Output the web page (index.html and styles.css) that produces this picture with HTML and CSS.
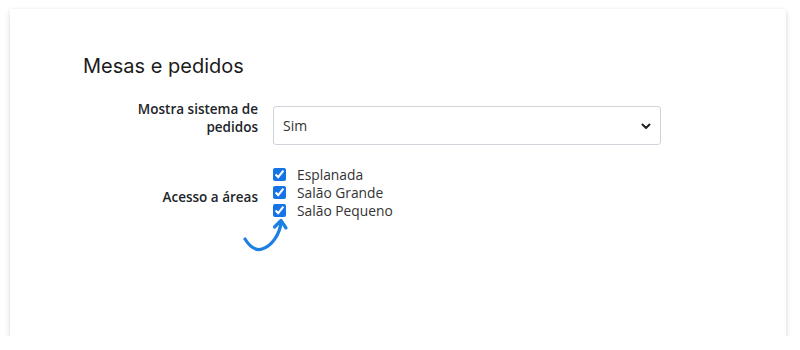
FILE: index.html
```html
<!DOCTYPE html>
<html>

<head>
  <title>Mesas e pedidos</title>
  <link rel="stylesheet" href="styles.css">
</head>

<body>

  <div class="card">
    <h2 class="title">Mesas e pedidos</h2>

    <div class="row">
      <label class="label" for="pedidos">Mostra sistema de pedidos</label>
      <div class="field">
        <div class="select">
          <span>Sim</span>
          <svg class="chevron" width="10" height="7" viewBox="0 0 10 7">
            <path d="M1.5 1.5 L5 5 L8.5 1.5" fill="none" stroke="#222" stroke-width="2" stroke-linecap="round" stroke-linejoin="round" />
          </svg>
        </div>
      </div>
    </div>

    <div class="row row-areas">
      <div class="label">Acesso a áreas</div>
      <div class="field checks">
        <label class="check"><input type="checkbox" checked /> Esplanada</label>
        <label class="check"><input type="checkbox" checked /> Salão Grande</label>
        <label class="check"><input type="checkbox" checked /> Salão Pequeno</label>
        <svg class="arrow" width="50" height="42" viewBox="0 0 50 42">
          <!-- curved pointer to the last checkbox -->
          <path d="M5 25 C10 33 16 37 22 35 C32 32 40 20 41 8" fill="none" stroke="#1b7fe3" stroke-width="3.2" stroke-linecap="round" />
          <path d="M34.5 13 L41 6.5 L46 14" fill="none" stroke="#1b7fe3" stroke-width="3.2" stroke-linecap="round" stroke-linejoin="round" />
        </svg>
      </div>
    </div>
  </div>

</body>

</html>
```

FILE: styles.css
```css
body { margin: 0; background: #fff; font-family: "Open Sans", "Noto Sans", Arial, sans-serif; color: #212529; }

.card {
  margin: 9px 14px 0 10px;
  height: 327px;
  box-sizing: border-box;
  background: #fff;
  box-shadow: 0 4px 6px rgba(30, 40, 110, 0.14), 0 0 3px rgba(30, 40, 110, 0.08);
  padding: 44px 0 0 73px;
}

.title {
  margin: 0 0 21px 0;
  font-family: "Inter", "Noto Sans", sans-serif;
  font-weight: 400;
  font-size: 20px;
  line-height: 26px;
  color: #1b1b1b;
}

.row { display: flex; align-items: flex-start; }
.row-areas { margin-top: 20px; align-items: center; }

.label {
  width: 175px;
  margin-right: 15px;
  text-align: right;
  font-weight: 600;
  font-size: 13.5px;
  line-height: 18px;
  color: #212529;
}
.row-areas .label { padding-top: 10px; }

.field { position: relative; }

.select {
  width: 388px;
  height: 39px;
  margin-top: 6px;
  box-sizing: border-box;
  border: 1px solid #ced4da;
  border-radius: 3px;
  display: flex;
  align-items: center;
  justify-content: space-between;
  padding: 0 9px 0 9px;
  font-size: 14px;
  color: #333;
}
.chevron { margin-top: 1px; }

.checks { display: flex; flex-direction: column; }
.check {
  display: flex;
  align-items: center;
  height: 18px;
  font-size: 13.8px;
  color: #333;
}
.check input {
  width: 13px;
  height: 13px;
  margin: 0 11px 0 0;
  accent-color: #1573e6;
}

.arrow { position: absolute; left: -33px; top: 49px; }
```
